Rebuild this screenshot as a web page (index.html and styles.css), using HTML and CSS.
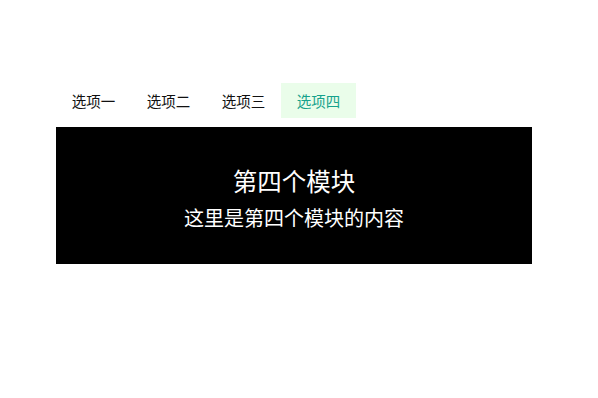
FILE: index.html
```html
<!DOCTYPE html>
<html lang="zh">
<head>
<meta charset="utf-8">
<title>选项卡</title>
<link rel="stylesheet" href="styles.css">
</head>
<body>
<div class="tabs-wrap">
  <ul class="tabs">
    <li class="tab">选项一</li>
    <li class="tab">选项二</li>
    <li class="tab">选项三</li>
    <li class="tab active">选项四</li>
  </ul>
  <div class="panel">
    <h2 class="panel-title">第四个模块</h2>
    <p class="panel-text">这里是第四个模块的内容</p>
  </div>
</div>
</body>
</html>
```

FILE: styles.css
```css
html, body {
  margin: 0;
  padding: 0;
  background: #fff;
}
body {
  font-family: "Noto Sans CJK SC", "Noto Sans", sans-serif;
  color: #000;
}
.tabs-wrap {
  margin: 83px 0 0 56px;
  width: 476px;
}
.tabs {
  list-style: none;
  margin: 0;
  padding: 0;
  display: flex;
}
.tab {
  width: 75px;
  height: 35px;
  line-height: 35px;
  text-align: center;
  font-size: 14.5px;
  color: #111;
}
.tab.active {
  background: #eafdea;
  color: #16a28c;
}
.panel {
  margin-top: 9px;
  height: 137px;
  box-sizing: border-box;
  padding-top: 42px;
  background: #000;
  color: #fff;
  text-align: center;
}
.panel-title {
  margin: 0;
  font-size: 24.5px;
  font-weight: normal;
  line-height: 24px;
}
.panel-text {
  margin: 15px 0 0;
  font-size: 20px;
  line-height: 20px;
}
```
